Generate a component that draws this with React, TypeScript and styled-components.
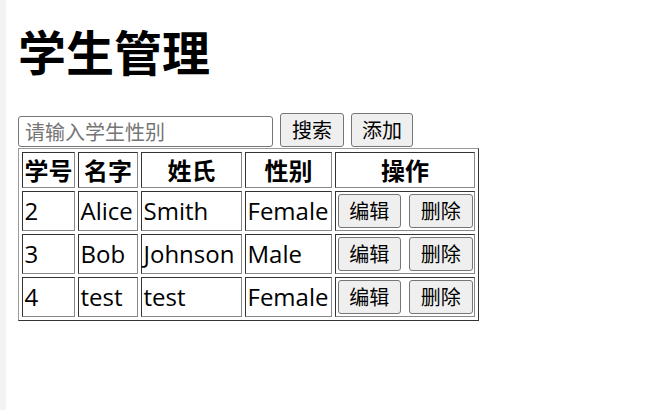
import React from "react";
import styled, { createGlobalStyle } from "styled-components";

const Global = createGlobalStyle`
  html, body { margin: 0; padding: 0; background: #fff; }
  body {
    font-family: "Open Sans", "Noto Sans CJK SC", sans-serif;
    color: #000;
  }
`;

const Page = styled.div`
  display: flex;
  min-height: 100vh;
`;

const Strip = styled.div`
  width: 6px;
  flex: none;
  background: #f3f3f3;
`;

const Content = styled.div`
  padding-left: 12px;
  display: flex;
  flex-direction: column;
  align-items: flex-start;
`;

const Title = styled.h1`
  margin: 26px 0 0;
  font-family: "Noto Sans CJK SC", sans-serif;
  font-size: 48px;
  line-height: 49px;
  font-weight: 700;
`;

const SearchBar = styled.div`
  margin-top: 38px;
  display: flex;
  align-items: flex-end;
  gap: 7px;
`;

const Input = styled.input`
  box-sizing: border-box;
  width: 255px;
  height: 31px;
  border: 1px solid #767676;
  border-radius: 3px;
  padding: 0 6px;
  font-family: "Noto Sans CJK SC", sans-serif;
  font-size: 20px;
  outline: none;
  &::placeholder { color: #757575; }
`;

const Button = styled.button<{ $w?: number }>`
  box-sizing: border-box;
  width: ${(p) => p.$w ?? 64}px;
  height: 34px;
  padding: 0;
  border: 1px solid #767676;
  border-radius: 3px;
  background: #efefef;
  color: #000;
  font-family: "Noto Sans CJK SC", sans-serif;
  font-size: 20px;
  line-height: 32px;
`;

const Table = styled.table`
  margin-top: 1px;
  border: 1px solid;
  border-color: #9a9a9a #333 #333 #9a9a9a;
  border-spacing: 3px;
  table-layout: fixed;
  width: 460px;
`;

const Th = styled.th<{ $w: number }>`
  width: ${(p) => p.$w}px;
  box-sizing: border-box;
  border: 1px solid;
  border-color: #333 #888 #888 #333;
  padding: 1px 1.5px;
  height: 36px;
  font-family: "Noto Sans CJK SC", sans-serif;
  font-size: 24px;
  line-height: 32px;
  font-weight: 700;
  text-align: center;
`;

const Td = styled.td`
  box-sizing: border-box;
  border: 1px solid;
  border-color: #333 #888 #888 #333;
  padding: 1px 1.5px;
  height: 40px;
  font-size: 24px;
  line-height: 34px;
  white-space: nowrap;
  overflow: visible;
  text-align: left;
`;

const Actions = styled.div`
  display: flex;
  gap: 8px;
`;

const rows = [
  { id: 2, name: "Alice", last: "Smith", sex: "Female" },
  { id: 3, name: "Bob", last: "Johnson", sex: "Male" },
  { id: 4, name: "test", last: "test", sex: "Female" },
];

export default function App() {
  return (
    <>
      <Global />
      <Page>
        <Strip />
        <Content>
          <Title>学生管理</Title>
          <SearchBar>
            <Input placeholder="请输入学生性别" />
            <Button>搜索</Button>
            <Button $w={62}>添加</Button>
          </SearchBar>
          <Table>
            <thead>
              <tr>
                <Th $w={53}>学号</Th>
                <Th $w={60}>名字</Th>
                <Th $w={101}>姓氏</Th>
                <Th $w={87}>性别</Th>
                <Th $w={140}>操作</Th>
              </tr>
            </thead>
            <tbody>
              {rows.map((r) => (
                <tr key={r.id}>
                  <Td>{r.id}</Td>
                  <Td>{r.name}</Td>
                  <Td>{r.last}</Td>
                  <Td>{r.sex}</Td>
                  <Td>
                    <Actions>
                      <Button>编辑</Button>
                      <Button>删除</Button>
                    </Actions>
                  </Td>
                </tr>
              ))}
            </tbody>
          </Table>
        </Content>
      </Page>
    </>
  );
}
